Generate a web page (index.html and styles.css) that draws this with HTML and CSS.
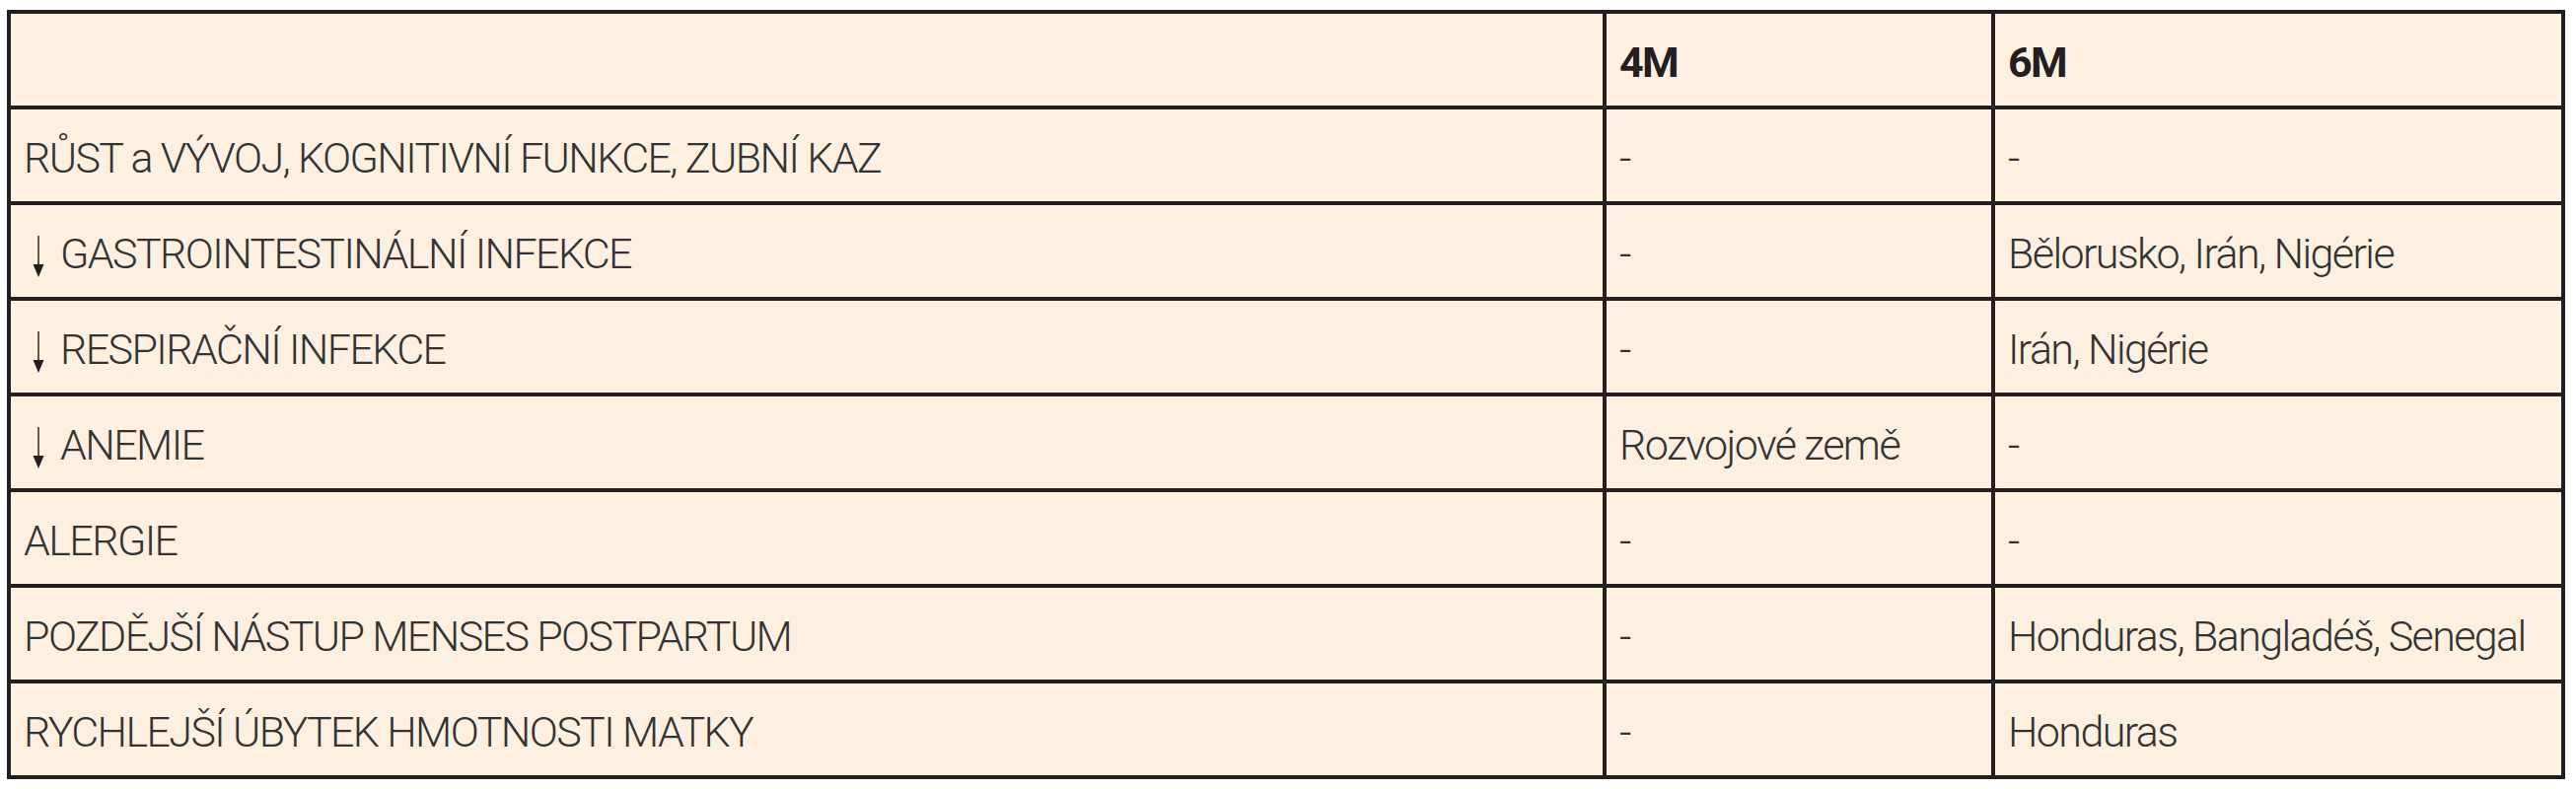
FILE: index.html
```html
<!DOCTYPE html>
<html lang="cs">
<head>
<meta charset="utf-8">
<title>Kojení 4M / 6M</title>
<link rel="stylesheet" href="styles.css">
</head>
<body>
<div class="table" role="table">
  <div class="row head" role="row">
    <div class="cell" role="columnheader"></div>
    <div class="cell" role="columnheader">4M</div>
    <div class="cell" role="columnheader">6M</div>
  </div>
  <div class="row" role="row">
    <div class="cell" role="cell">RŮST a VÝVOJ, KOGNITIVNÍ FUNKCE, ZUBNÍ KAZ</div>
    <div class="cell" role="cell">-</div>
    <div class="cell" role="cell">-</div>
  </div>
  <div class="row" role="row">
    <div class="cell" role="cell"><svg class="down" viewBox="0 0 14 42" aria-hidden="true"><rect x="6" y="0" width="2" height="32" fill="#6b5548"/><path d="M1.5 29 L12.5 29 L7 42 Z" fill="#231f20"/></svg>GASTROINTESTINÁLNÍ INFEKCE</div>
    <div class="cell" role="cell">-</div>
    <div class="cell" role="cell">Bělorusko, Irán, Nigérie</div>
  </div>
  <div class="row" role="row">
    <div class="cell" role="cell"><svg class="down" viewBox="0 0 14 42" aria-hidden="true"><rect x="6" y="0" width="2" height="32" fill="#6b5548"/><path d="M1.5 29 L12.5 29 L7 42 Z" fill="#231f20"/></svg>RESPIRAČNÍ INFEKCE</div>
    <div class="cell" role="cell">-</div>
    <div class="cell" role="cell">Irán, Nigérie</div>
  </div>
  <div class="row" role="row">
    <div class="cell" role="cell"><svg class="down" viewBox="0 0 14 42" aria-hidden="true"><rect x="6" y="0" width="2" height="32" fill="#6b5548"/><path d="M1.5 29 L12.5 29 L7 42 Z" fill="#231f20"/></svg>ANEMIE</div>
    <div class="cell" role="cell">Rozvojové země</div>
    <div class="cell" role="cell">-</div>
  </div>
  <div class="row" role="row">
    <div class="cell" role="cell">ALERGIE</div>
    <div class="cell" role="cell">-</div>
    <div class="cell" role="cell">-</div>
  </div>
  <div class="row" role="row">
    <div class="cell" role="cell">POZDĚJŠÍ NÁSTUP MENSES POSTPARTUM</div>
    <div class="cell" role="cell">-</div>
    <div class="cell" role="cell">Honduras, Bangladéš, Senegal</div>
  </div>
  <div class="row" role="row">
    <div class="cell" role="cell">RYCHLEJŠÍ ÚBYTEK HMOTNOSTI MATKY</div>
    <div class="cell" role="cell">-</div>
    <div class="cell" role="cell">Honduras</div>
  </div>
</div>
</body>
</html>
```

FILE: styles.css
```css
html, body {
  margin: 0;
  padding: 0;
  background: #ffffff;
}

body {
  padding: 10px 0 0 7px;
  font-family: Roboto, "Liberation Sans", Arial, sans-serif;
}

.table {
  box-sizing: border-box;
  width: 2594px;
  border-top: 4px solid #231f20;
  border-left: 4px solid #231f20;
  background: #fdf0e0;
}

.row {
  display: grid;
  grid-template-columns: 1618px 394px 578px;
}

.cell {
  box-sizing: border-box;
  height: 97px;
  padding: 26px 13px 0 13px;
  border-right: 4px solid #231f20;
  border-bottom: 4px solid #231f20;
  font-size: 43px;
  line-height: 46px;
  letter-spacing: -1.6px;
  font-weight: 300;
  color: #333333;
  white-space: nowrap;
}

.head .cell {
  font-weight: 700;
  color: #231f20;
}

.down {
  width: 14px;
  height: 42px;
  vertical-align: -9px;
  margin: 0 15px 0 8px;
}
```
